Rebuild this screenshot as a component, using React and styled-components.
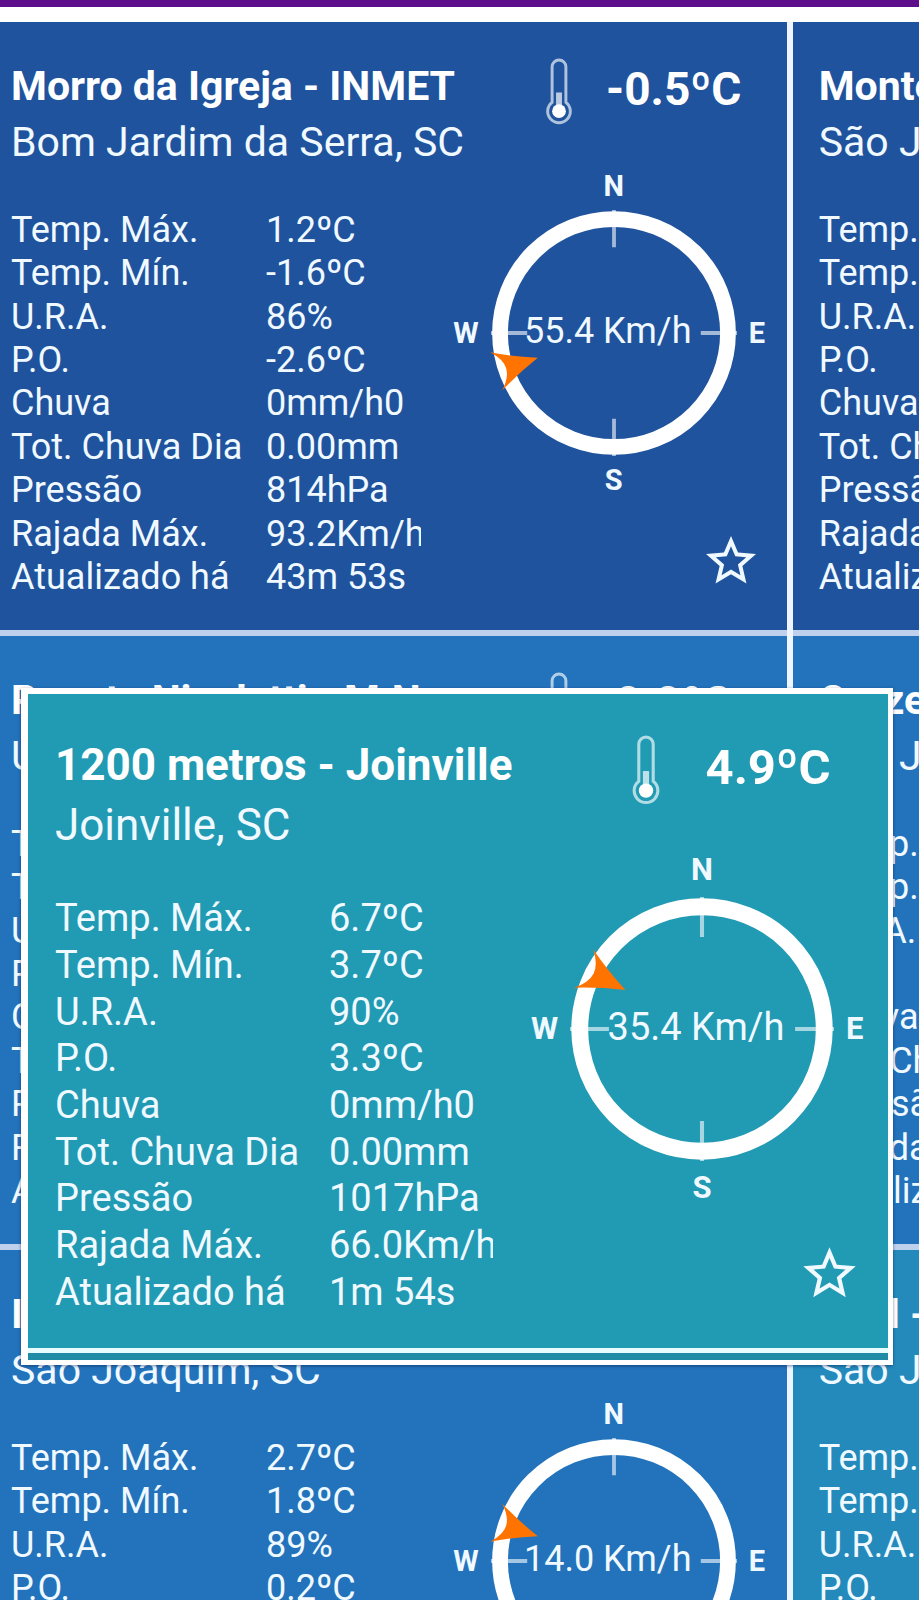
import { createGlobalStyle, styled, ThemeProvider } from "styled-components";
import { MdStarBorder } from "react-icons/md";

const LABELS = [
  "Temp. Máx.",
  "Temp. Mín.",
  "U.R.A.",
  "P.O.",
  "Chuva",
  "Tot. Chuva Dia",
  "Pressão",
  "Rajada Máx.",
  "Atualizado há",
];

const stations = [
  {
    name: "Morro da Igreja - INMET",
    city: "Bom Jardim da Serra, SC",
    temp: "-0.5ºC",
    wind: "55.4 Km/h",
    angle: 252,
    color: "#1f539d",
    values: ["1.2ºC", "-1.6ºC", "86%", "-2.6ºC", "0mm/h0", "0.00mm", "814hPa", "93.2Km/h", "43m 53s"],
  },
  {
    name: "Monte Agudo",
    city: "São Joaquim, SC",
    temp: "-0.2ºC",
    wind: "40.2 Km/h",
    angle: 270,
    color: "#1f539d",
    values: ["1.9ºC", "-1.1ºC", "88%", "-2.0ºC", "0mm/h0", "0.00mm", "836hPa", "70.1Km/h", "2m 10s"],
  },
  {
    name: "Poente Nicoletti - M.N.",
    city: "Urupema, SC",
    temp: "0.0ºC",
    wind: "12.0 Km/h",
    angle: 280,
    color: "#2273bb",
    values: ["2.1ºC", "-0.4ºC", "90%", "-1.2ºC", "0mm/h0", "0.00mm", "860hPa", "41.0Km/h", "3m 20s"],
  },
  {
    name: "Cruzeiro",
    city: "São Joaquim, SC",
    temp: "0.2ºC",
    wind: "16.3 Km/h",
    angle: 265,
    color: "#2273bb",
    values: ["2.4ºC", "0.6ºC", "89%", "-0.8ºC", "0mm/h0", "0.00mm", "862hPa", "38.6Km/h", "1m 12s"],
  },
  {
    name: "INMET",
    city: "São Joaquim, SC",
    temp: "1.9ºC",
    wind: "14.0 Km/h",
    angle: 288,
    color: "#2273bb",
    values: ["2.7ºC", "1.8ºC", "89%", "0.2ºC", "0mm/h0", "0.00mm", "863hPa", "50.0Km/h", "43m 53s"],
  },
  {
    name: "Snel - Centro",
    city: "São Joaquim, SC",
    temp: "2.0ºC",
    wind: "9.7 Km/h",
    angle: 275,
    color: "#238abb",
    values: ["3.1ºC", "1.9ºC", "87%", "0.6ºC", "0mm/h0", "0.00mm", "864hPa", "32.2Km/h", "4m 02s"],
  },
];

const highlighted = {
  name: "1200 metros - Joinville",
  city: "Joinville, SC",
  temp: "4.9ºC",
  wind: "35.4 Km/h",
  angle: 297,
  color: "#219ab3",
  values: ["6.7ºC", "3.7ºC", "90%", "3.3ºC", "0mm/h0", "0.00mm", "1017hPa", "66.0Km/h", "1m 54s"],
};

const small = {
  padding: "36px 6px 31px 26px",
  side: 334,
  line: 56,
  title: 41,
  city: 41,
  text: 36,
  tableGap: 38,
  tableHeight: 391,
  label: 255,
  value: 155,
  tempSize: 46,
  tempLine: 62,
  tempWidth: 174,
  thermo: 28,
  thermoHeight: 67,
  inset: 20,
  compassGap: 46,
  rowGap: 8,
  ring: 248,
  letter: 29,
  star: 60,
  starGap: 36,
};

const large = {
  padding: "41px 6px 33px 27px",
  side: 360,
  line: 60,
  title: 44,
  city: 44,
  text: 38,
  tableGap: 40,
  tableHeight: 420,
  label: 274,
  value: 164,
  tempSize: 49,
  tempLine: 66,
  tempWidth: 186,
  thermo: 30,
  thermoHeight: 70,
  inset: 21,
  compassGap: 50,
  rowGap: 11,
  ring: 266,
  letter: 31,
  star: 63,
  starGap: 39,
};

const Thermometer = () => (
  <ThermoIcon viewBox="0 0 28 68" fill="none" aria-hidden="true">
    <path
      d="M7 45V9a7 7 0 0 1 14 0v36a11.500 11.500 0 1 1-14 0Z"
      stroke="#fff"
      strokeOpacity="0.65"
      strokeWidth="3"
    />
    <path d="M14 35v18" stroke="#fff" strokeOpacity="0.7" strokeWidth="6" />
    <circle cx="14" cy="54" r="7" fill="#fff" />
  </ThermoIcon>
);

const Compass = ({ wind, angle }) => (
  <CompassGrid>
    <Letter $area="n">N</Letter>
    <Letter $area="w">W</Letter>
    <Ring>
      <RingIcon viewBox="0 0 260 260" aria-hidden="true">
        <circle cx="130" cy="130" r="119.500" fill="none" stroke="#fff" strokeWidth="16.500" />
        <path
          d="M130 1v39M130 220v39M1 130h38M221 130h38"
          stroke="#fff"
          strokeOpacity="0.6"
          strokeWidth="4"
        />
        <path
          d="M109 0Q121 22 130 46Q139 22 151 0Q140 11 130 11Q120 11 109 0Z"
          fill="#ff7300"
          transform={`rotate(${angle} 130 130)`}
        />
      </RingIcon>
      <Wind>{wind}</Wind>
    </Ring>
    <Letter $area="e">E</Letter>
    <Letter $area="s">S</Letter>
  </CompassGrid>
);

const Station = ({ name, city, temp, wind, angle, color, values }) => (
  <Card $color={color}>
    <Info>
      <Title>{name}</Title>
      <City>{city}</City>
      <Table>
        <tbody>
          {LABELS.map((label, i) => (
            <tr key={label}>
              <Label scope="row">{label}</Label>
              <Value>
                <Clip>{values[i]}</Clip>
              </Value>
            </tr>
          ))}
        </tbody>
      </Table>
    </Info>
    <Side>
      <Current>
        <Thermometer />
        <Temp>{temp}</Temp>
      </Current>
      <Compass wind={wind} angle={angle} />
      <StarButton type="button" aria-label="Favoritar">
        <MdStarBorder />
      </StarButton>
    </Side>
  </Card>
);

const App = () => (
  <>
    <GlobalStyle />
    <Page>
      <TopBar />
      <ThemeProvider theme={small}>
        <Grid>
          {stations.map((station) => (
            <Station key={station.name} {...station} />
          ))}
        </Grid>
      </ThemeProvider>
      <ThemeProvider theme={large}>
        <Popup>
          <Station {...highlighted} />
        </Popup>
      </ThemeProvider>
    </Page>
  </>
);

const GlobalStyle = createGlobalStyle`
  * {
    box-sizing: border-box;
  }

  body {
    margin: 0;
    font-family: Roboto, "Liberation Sans", sans-serif;
    color: #f0f9ff;
    background: #fff;
  }
`;

const Page = styled.main`
  position: relative;
  height: 100vh;
  overflow: hidden;
`;

const TopBar = styled.header`
  height: 7px;
  margin-bottom: 15px;
  background: #5c0e8b;
`;

const Grid = styled.div`
  display: grid;
  grid-template-columns: repeat(2, calc(88vw - 7px));
  column-gap: 6px;
  margin-left: -15px;
  background: #eef5ff;
`;

const Card = styled.article`
  display: grid;
  grid-template-columns: minmax(0, 1fr) ${({ theme }) => theme.side}px;
  padding: ${({ theme }) => theme.padding};
  background: ${({ $color }) => $color};
  border-bottom: 6px solid #bdd0ec;
`;

const Popup = styled.section`
  position: absolute;
  top: 688px;
  left: 21px;
  right: 26px;
  padding-bottom: 7px;
  background: #1f8ba6;
  border: 5px solid #fff;
  border-top-width: 6px;
  border-left-width: 7px;
  box-shadow: 0 1px 3px rgba(0, 20, 70, 0.5);

  ${Card} {
    border-bottom: 5px solid #e8fbff;
  }
`;

const Info = styled.div`
  white-space: nowrap;
`;

const Title = styled.h2`
  margin: 0;
  font-size: ${({ theme }) => theme.title}px;
  line-height: ${({ theme }) => theme.line}px;
  font-weight: 700;
  color: #fff;
`;

const City = styled.p`
  margin: 0;
  font-size: ${({ theme }) => theme.city}px;
  line-height: ${({ theme }) => theme.line}px;
`;

const Table = styled.table`
  height: ${({ theme }) => theme.tableHeight}px;
  margin-top: ${({ theme }) => theme.tableGap}px;
  border-collapse: collapse;
  table-layout: fixed;
  width: ${({ theme }) => theme.label + theme.value}px;
  font-size: ${({ theme }) => theme.text}px;
  line-height: 40px;
`;

const Label = styled.th`
  width: ${({ theme }) => theme.label}px;
  padding: 0;
  font-weight: 400;
  text-align: left;
`;

const Value = styled.td`
  padding: 0;
`;

const Clip = styled.div`
  overflow: hidden;
`;

const Side = styled.div`
  display: flex;
  flex-direction: column;
`;

const Current = styled.div`
  display: flex;
  justify-content: flex-end;
  gap: 14px;
  padding-right: ${({ theme }) => theme.inset}px;
`;

const ThermoIcon = styled.svg`
  width: ${({ theme }) => theme.thermo}px;
  height: ${({ theme }) => theme.thermoHeight}px;
`;

const Temp = styled.strong`
  width: ${({ theme }) => theme.tempWidth}px;
  font-size: ${({ theme }) => theme.tempSize}px;
  line-height: ${({ theme }) => theme.tempLine}px;
  font-weight: 700;
  text-align: center;
  white-space: nowrap;
  color: #fff;
`;

const CompassGrid = styled.div`
  display: grid;
  grid-template-columns: 1fr auto 1fr;
  grid-template-areas:
    ". n ."
    "w ring e"
    ". s .";
  align-items: center;
  gap: ${({ theme }) => theme.rowGap}px 11px;
  margin-top: ${({ theme }) => theme.compassGap}px;
`;

const Letter = styled.span`
  grid-area: ${({ $area }) => $area};
  justify-self: ${({ $area }) => ({ w: "end", e: "start" })[$area] || "center"};
  font-size: ${({ theme }) => theme.letter}px;
  line-height: 30px;
  font-weight: 700;
`;

const Ring = styled.div`
  grid-area: ring;
  position: relative;
  width: ${({ theme }) => theme.ring}px;
  height: ${({ theme }) => theme.ring}px;
`;

const RingIcon = styled.svg`
  display: block;
  width: 100%;
  height: 100%;
`;

const Wind = styled.span`
  position: absolute;
  inset: 0 12px 4px 0;
  display: flex;
  align-items: center;
  justify-content: center;
  font-size: ${({ theme }) => theme.text}px;
  white-space: nowrap;
`;

const StarButton = styled.button`
  display: flex;
  align-self: flex-end;
  margin-top: ${({ theme }) => theme.starGap}px;
  margin-right: ${({ theme }) => theme.inset}px;
  padding: 0;
  border: 0;
  background: none;
  color: inherit;
  font-size: ${({ theme }) => theme.star}px;
  cursor: pointer;
`;

export default App;
